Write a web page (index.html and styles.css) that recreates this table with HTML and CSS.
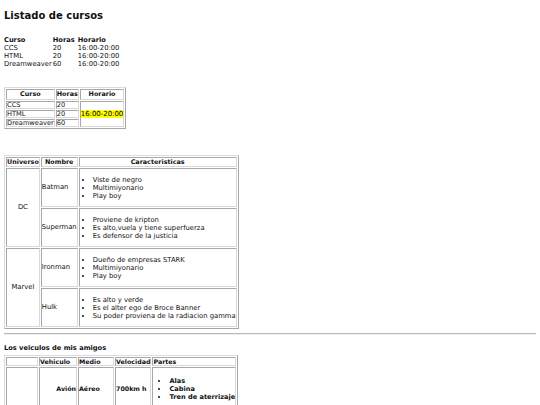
FILE: index.html
```
<!DOCTYPE html>
<html lang="es">
<head>
<meta charset="utf-8">
<title>Listado de cursos</title>
<link rel="stylesheet" href="styles.css">
</head>
<body>
<h2 class="title">Listado de cursos</h2>
<table class="plain">
  <tr><th>Curso</th><th class="c-hrs">Horas</th><th>Horario</th></tr>
  <tr><td>CCS</td><td>20</td><td>16:00-20:00</td></tr>
  <tr><td>HTML</td><td>20</td><td>16:00-20:00</td></tr>
  <tr><td>Dreamweaver</td><td>60</td><td>16:00-20:00</td></tr>
</table>

<table class="grid courses">
  <tr><th>Curso</th><th>Horas</th><th>Horario</th></tr>
  <tr><td>CCS</td><td>20</td><td rowspan="3" class="center"><mark class="hl">16:00-20:00</mark></td></tr>
  <tr><td>HTML</td><td>20</td></tr>
  <tr><td>Dreamweaver</td><td>60</td></tr>
</table>

<table class="grid heroes">
  <tr><th>Universo</th><th>Nombre</th><th>Caracteristicas</th></tr>
  <tr>
    <td rowspan="2" class="center">DC</td>
    <td>Batman</td>
    <td><ul class="list"><li>Viste de negro</li><li>Multimiyonario</li><li>Play boy</li></ul></td>
  </tr>
  <tr>
    <td>Superman</td>
    <td><ul class="list"><li>Proviene de kripton</li><li>Es alto,vuela y tiene superfuerza</li><li>Es defensor de la justicia</li></ul></td>
  </tr>
  <tr>
    <td rowspan="2" class="center">Marvel</td>
    <td>Ironman</td>
    <td><ul class="list"><li>Dueño de empresas STARK</li><li>Multimiyonario</li><li>Play boy</li></ul></td>
  </tr>
  <tr>
    <td>Hulk</td>
    <td><ul class="list"><li>Es alto y verde</li><li>Es el alter ego de Broce Banner</li><li>Su poder proviena de la radiacion gamma</li></ul></td>
  </tr>
</table>

<hr class="rule">

<h4 class="subtitle">Los veiculos de mis amigos</h4>

<table class="grid vehicles">
  <tr><td class="c-img"></td><td class="c-veh">Vehiculo</td><td class="c-med">Medio</td><td class="c-vel">Velocidad</td><td class="c-par">Partes</td></tr>
  <tr>
    <td rowspan="2"></td>
    <td class="right">Avión</td>
    <td>Aéreo</td>
    <td>700km h</td>
    <td><ul class="list list-b"><li>Alas</li><li>Cabina</li><li>Tren de aterrizaje</li></ul></td>
  </tr>
  <tr>
    <td class="right">Coche</td>
    <td>Terrestre</td>
    <td>200km h</td>
    <td><ul class="list list-b"><li>Ruedas</li><li>Motor</li><li>Volante</li></ul></td>
  </tr>
</table>
</body>
</html>
```
FILE: styles.css
```
html, body {
  background: #fff;
}
body {
  margin: 4px;
  font-family: "DejaVu Sans", Verdana, sans-serif;
  font-size: 6.8px;
  color: #111;
}
.title {
  font-size: 10px;
  font-weight: bold;
  margin: 6px 0 14px;
  line-height: 12px;
}
table {
  border-collapse: separate;
  border-spacing: 1px;
}
td, th {
  padding: 0;
  line-height: 7px;
}
th {
  font-size: 6.4px;
}
.plain {
  margin-left: -1px;
  margin-bottom: 18px;
}
.plain th {
  text-align: left;
  font-size: 6.67px;
}
.plain .c-hrs {
  width: 24px;
}
.grid {
  border: 1px solid;
  border-color: #dcdcdc #a8a8a8 #a8a8a8 #dcdcdc;
}
.grid td, .grid th {
  border: 1px solid;
  border-color: #a8a8a8 #d8d8d8 #d8d8d8 #a8a8a8;
}
.courses {
  margin-bottom: 26px;
}
.courses th {
  line-height: 9px;
}
.courses td {
  font-size: 6.67px;
  line-height: 6px;
}
.center {
  text-align: center;
  vertical-align: middle;
}
.right {
  text-align: right;
}
.hl {
  background: #ffff00;
  color: #000;
  font-size: 6.95px;
}
.heroes th {
  line-height: 8px;
}
.list {
  margin: 6.5px 0;
  padding-left: 13px;
}
.list li {
  line-height: 8px;
}
.rule {
  margin: 4px 0;
  border: 0;
  border-top: 1px solid #b8b8b8;
  border-bottom: 1px solid #eee;
}
.subtitle {
  font-size: 6.67px;
  font-weight: bold;
  margin: 9px 0 3px;
  line-height: 8px;
}
.vehicles td {
  font-size: 6.3px;
  font-weight: bold;
  line-height: 7px;
}
.c-img { width: 30px; }
.c-veh { width: 36px; }
.c-med { width: 34px; }
.list-b {
  margin: 8.5px 0;
  padding-left: 16px;
  font-size: 6.6px;
}
```
